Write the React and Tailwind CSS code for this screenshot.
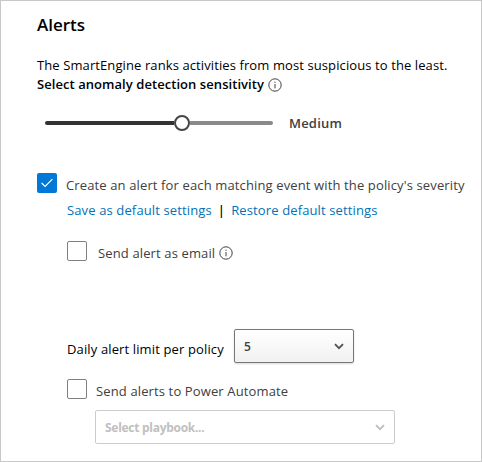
import React from "react";

function InfoIcon() {
  return (
    <svg width="14" height="14" viewBox="0 0 14 14" fill="none" className="shrink-0">
      <circle cx="7" cy="7" r="6.2" stroke="#404040" strokeWidth="1" />
      <path d="M7 6v4.3" stroke="#404040" strokeWidth="1" />
      <path d="M7 3.7v1.2" stroke="#404040" strokeWidth="1" />
    </svg>
  );
}

function Chevron({ className }) {
  return (
    <svg width="10" height="7" viewBox="0 0 10 7" fill="none" className={className}>
      <path d="M1 1.2l4 4 4-4" stroke="currentColor" strokeWidth="1.8" />
    </svg>
  );
}

function Checkbox({ checked }) {
  if (checked) {
    return (
      <span className="flex h-5 w-5 shrink-0 items-center justify-center rounded-[2px] bg-[#0078d7]">
        <svg width="12" height="10" viewBox="0 0 12 10" fill="none">
          <path d="M0.6 5l3.5 3.5L11.4 1.2" stroke="#fff" strokeWidth="1.2" />
        </svg>
      </span>
    );
  }
  return <span className="h-5 w-5 shrink-0 rounded-[2px] border border-[#808080] bg-white" />;
}

export default function App() {
  return (
    <main className="flex h-[462px] w-[482px] flex-col border border-[#c8c8c8] bg-white pl-9 font-['Open_Sans','Noto_Sans',sans-serif] text-[13px] leading-[19px] tracking-[0.13px] whitespace-nowrap text-[#404040]">
      <h1 className="mt-[10px] h-7 text-[17px] leading-7 font-semibold tracking-normal text-black">Alerts</h1>

      <section className="mt-[17px] text-black">
        <p className="tracking-[0.1px]">The SmartEngine ranks activities from most suspicious to the least.</p>
        <div className="flex items-center gap-1">
          <span className="font-semibold tracking-[0.06px]">Select anomaly detection sensitivity</span>
          <InfoIcon />
        </div>
      </section>

      <div className="mt-[19px] ml-2 flex h-5 items-center">
        <div className="flex w-[228px] items-center">
          <div className="h-1 w-[129px] rounded-l-full bg-[#333]" />
          <div className="h-4 w-4 rounded-full border-2 border-[#454545] bg-white" />
          <div className="h-1 flex-1 rounded-r-full bg-[#8a8a8a]" />
        </div>
        <span className="ml-4 font-semibold tracking-[0.2px]">Medium</span>
      </div>

      <div className="mt-10 flex h-5 gap-[9px]">
        <Checkbox checked />
        <span className="mt-[3px]">Create an alert for each matching event with the policy's severity</span>
      </div>

      <div className="mt-2 ml-[30px] flex h-[19px] text-[#0072b8]">
        <a>Save as default settings</a>
        <span className="mr-[6px] ml-[6px] font-semibold text-black">|</span>
        <a>Restore default settings</a>
      </div>

      <div className="mt-[21px] ml-[30px] flex h-5">
        <Checkbox />
        <span className="mt-[3px] ml-[11px]">Send alert as email</span>
        <span className="mt-[5px] ml-1"><InfoIcon /></span>
      </div>

      <div className="mt-[68px] ml-[30px] flex h-[34px] items-center">
        <span className="mt-[6px] w-[167px] text-black">Daily alert limit per policy</span>
        <div className="flex h-[34px] w-[120px] items-center justify-between rounded-[2px] border border-[#777] bg-linear-to-b from-white to-[#f1f1f1] px-[9px] shadow-[0_1px_2px_rgba(0,0,0,0.15)]">
          <span className="mt-0.5 text-xs font-semibold">5</span>
          <Chevron className="text-[#505050]" />
        </div>
      </div>

      <div className="mt-4 ml-[30px] flex h-5 gap-[9px]">
        <Checkbox />
        <span className="mt-[3px]">Send alerts to Power Automate</span>
      </div>

      <div className="mt-[11px] ml-[58px] flex h-[34px] w-[300px] items-center justify-between rounded-[2px] border border-[#ccc] px-[9px] text-[#c0c0c0]">
        <span className="mt-0.5 text-xs font-bold tracking-[-0.28px]">Select playbook...</span>
        <Chevron className="text-[#bdbdbd]" />
      </div>
    </main>
  );
}
